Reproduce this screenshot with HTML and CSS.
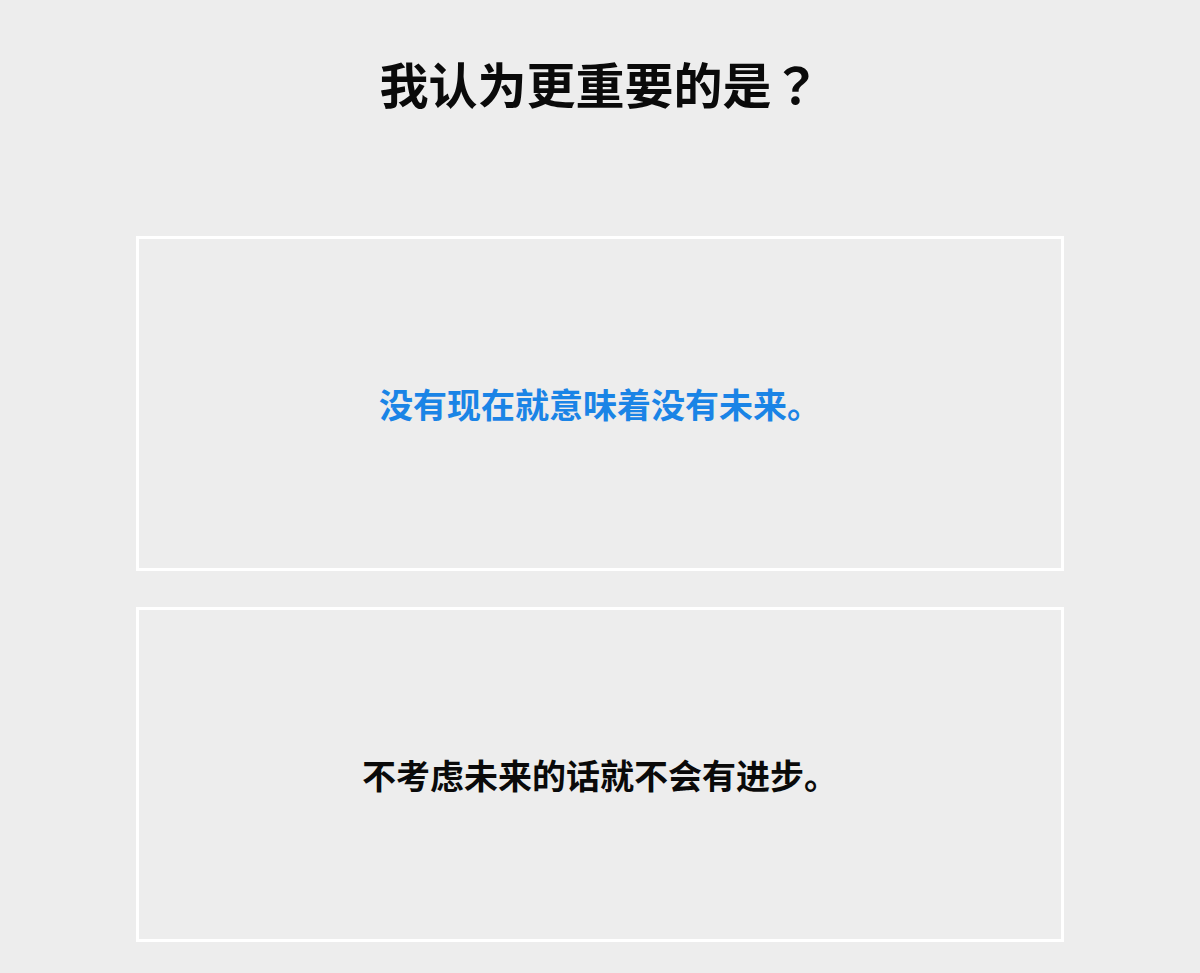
FILE: index.html
```html
<!DOCTYPE html>
<html lang="zh-CN">

<head>
    <meta charset="UTF-8">
    <meta name="viewport" content="width=device-width, initial-scale=1.0">
    <title>选择</title>
    <link rel="stylesheet" href="styles.css">
</head>

<body>
    <div class="page">
        <h1 class="question">我认为更重要的是<span class="mark" lang="ja">？</span></h1>

        <div class="options">
            <div class="option selected">没有现在就意味着没有未来。</div>
            <div class="option">不考虑未来的话就不会有进步。</div>
        </div>
    </div>
</body>

</html>
```

FILE: styles.css
```css
body {
    font-family: "Noto Sans CJK SC", "Noto Sans", sans-serif;
    background-color: #ededed;
    margin: 0;
    padding: 0;
}

.page {
    width: 928px;
    margin: 0 auto;
    padding-top: 49px;
}

.question {
    margin: 0;
    font-size: 49px;
    line-height: 68px;
    font-weight: bold;
    text-align: center;
    color: #0a0a0a;
}

/* full-width question mark sits centred in its cell */
.question .mark {
    font-family: "Noto Sans CJK JP", "Noto Sans CJK SC", sans-serif;
}

.options {
    display: flex;
    flex-direction: column;
    gap: 36px;
    margin-top: 119px;
}

.option {
    height: 335px;
    box-sizing: border-box;
    border: 3px solid #fff;
    display: flex;
    align-items: center;
    justify-content: center;
    font-size: 34px;
    font-weight: bold;
    color: #0a0a0a;
}

.option.selected {
    color: #1a84e6;
}
```
